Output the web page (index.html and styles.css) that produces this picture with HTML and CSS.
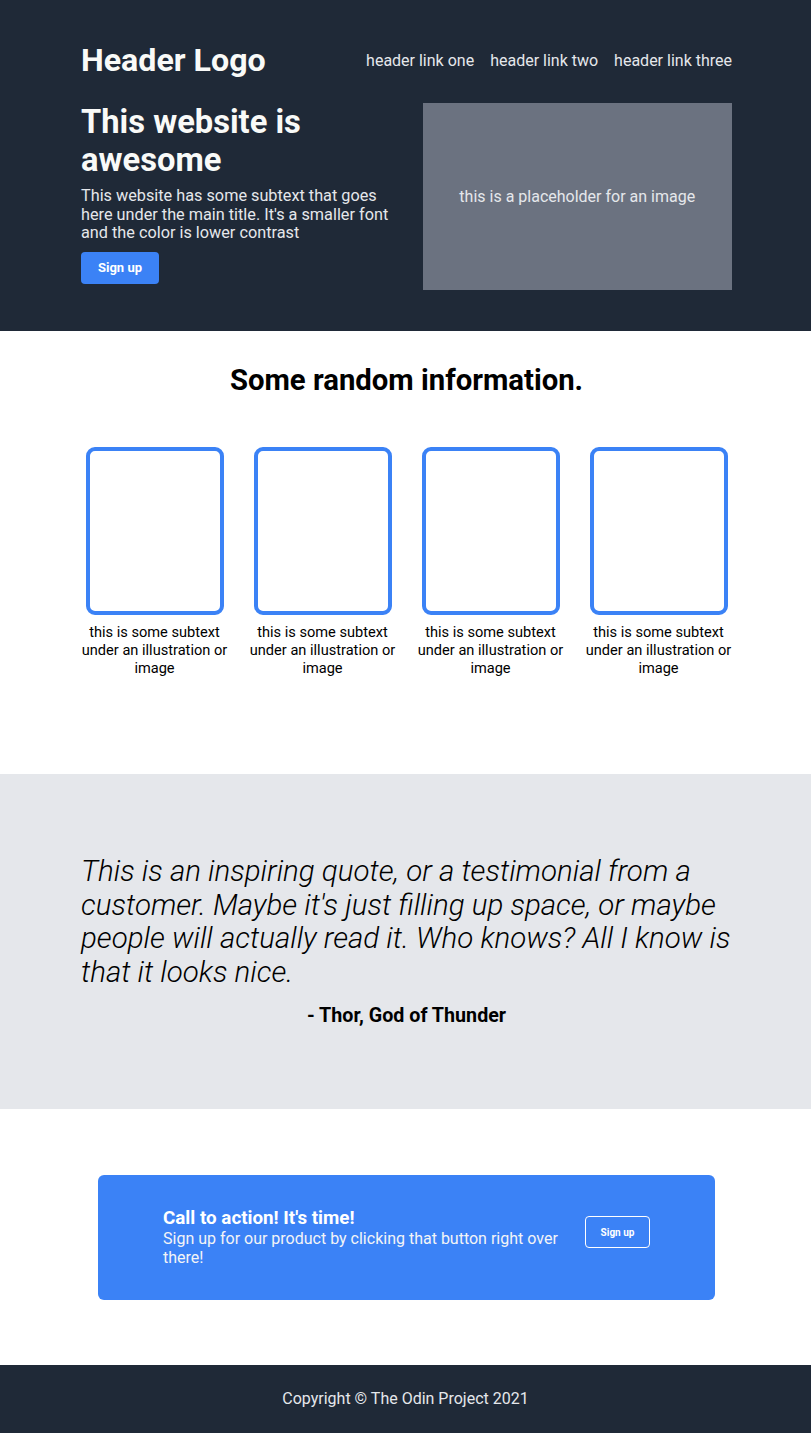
FILE: index.html
```html
<!DOCTYPE html>
<html lang="en">
<head>
<meta charset="utf-8">
<title>Landing Page</title>
<link rel="stylesheet" href="styles.css">
</head>
<body>
<header class="top">
  <div class="container">
    <div class="nav-row">
      <div class="logo">Header Logo</div>
      <nav class="links">
        <a href="#">header link one</a>
        <a href="#">header link two</a>
        <a href="#">header link three</a>
      </nav>
    </div>
    <div class="hero">
      <div class="hero-text">
        <h1 class="hero-title">This website is awesome</h1>
        <p class="hero-sub">This website has some subtext that goes here under the main title. It's a smaller font and the color is lower contrast</p>
        <button class="btn-primary">Sign up</button>
      </div>
      <div class="hero-image">this is a placeholder for an image</div>
    </div>
  </div>
</header>

<section class="info">
  <div class="container">
    <h2 class="info-title">Some random information.</h2>
    <div class="cards">
      <div class="card"><div class="card-box"></div><p class="card-text">this is some subtext under an illustration or image</p></div>
      <div class="card"><div class="card-box"></div><p class="card-text">this is some subtext under an illustration or image</p></div>
      <div class="card"><div class="card-box"></div><p class="card-text">this is some subtext under an illustration or image</p></div>
      <div class="card"><div class="card-box"></div><p class="card-text">this is some subtext under an illustration or image</p></div>
    </div>
  </div>
</section>

<section class="quote">
  <div class="container">
    <p class="quote-text">This is an inspiring quote, or a testimonial from a customer. Maybe it's just filling up space, or maybe people will actually read it. Who knows? All I know is that it looks nice.</p>
    <p class="quote-author">- Thor, God of Thunder</p>
  </div>
</section>

<section class="cta-section">
  <div class="cta">
    <div class="cta-text">
      <div class="cta-title">Call to action! It's time!</div>
      <div class="cta-sub">Sign up for our product by clicking that button right over there!</div>
    </div>
    <button class="btn-outline">Sign up</button>
  </div>
</section>

<footer class="footer">Copyright © The Odin Project 2021</footer>
</body>
</html>
```

FILE: styles.css
```css
* { box-sizing: border-box; }

body {
  margin: 0;
  font-family: Roboto, "Liberation Sans", sans-serif;
  color: #000;
  background: #fff;
}

.container {
  width: 651px;
  margin-left: calc(50% - 324.5px);
}

.top {
  background: #1f2937;
  padding: 41px 0 41px;
}

.nav-row {
  display: flex;
  justify-content: space-between;
  align-items: center;
  height: 38px;
}

.logo {
  font-size: 32.2px;
  font-weight: 700;
  color: #f9faf8;
}

.links {
  display: flex;
  gap: 16px;
}

.links a {
  color: #e5e7eb;
  text-decoration: none;
  font-size: 16px;
}

.hero {
  display: flex;
  gap: 32px;
  margin-top: 24px;
  align-items: flex-start;
}

.hero-text, .hero-image { flex: 1; }

.hero-text {
  display: flex;
  flex-direction: column;
  align-items: flex-start;
}

.hero-title {
  margin: 0;
  font-size: 32.7px;
  font-weight: 700;
  line-height: 38px;
  color: #f9faf8;
}

.hero-sub {
  margin: 8px 0 9px;
  font-size: 16.25px;
  line-height: 18.5px;
  color: #e5e7eb;
}

.btn-primary {
  font-family: inherit;
  background: #3b82f6;
  color: #fff;
  border: none;
  border-radius: 4px;
  height: 32px;
  width: 78px;
  padding: 0;
  font-size: 13px;
  font-weight: 700;
}

.hero-image {
  height: 187px;
  background: #6b7280;
  color: #e5e7eb;
  font-size: 16px;
  display: flex;
  align-items: center;
  justify-content: center;
}

.info {
  padding: 33px 0 97px;
}

.info-title {
  margin: 0;
  text-align: center;
  font-size: 29.3px;
  font-weight: 700;
  line-height: 33px;
}

.cards {
  margin-top: 50px;
  display: grid;
  grid-template-columns: repeat(4, 147px);
  gap: 21px;
}

.card {
  display: flex;
  flex-direction: column;
  align-items: center;
}

.card-box {
  width: 138px;
  height: 168px;
  border: 4px solid #3b82f6;
  border-radius: 9px;
}

.card-text {
  margin: 8px 0 0;
  text-align: center;
  font-size: 14.6px;
  line-height: 18px;
}

.quote {
  background: #e5e7eb;
  padding: 81px 0 82px;
}

.quote-text {
  margin: 0;
  font-size: 29.5px;
  font-weight: 300;
  font-style: italic;
  line-height: 33.5px;
}

.quote-author {
  margin: 15px 0 0;
  text-align: center;
  font-size: 19.7px;
  font-weight: 700;
  line-height: 23px;
}

.cta-section {
  padding: 66px 0 65px;
}

.cta {
  width: 617px;
  margin-left: calc(50% - 307.5px);
  height: 125px;
  background: #3b82f6;
  border-radius: 6px;
  padding: 0 65px;
  display: flex;
  align-items: center;
  gap: 24px;
  color: #fff;
}

.cta-text { flex: 1; }

.cta-title {
  font-size: 18.8px;
  font-weight: 700;
  line-height: 21px;
}

.cta-sub {
  font-size: 16px;
  line-height: 19px;
  color: #f3f4f6;
}

.btn-outline {
  font-family: inherit;
  background: transparent;
  color: #fff;
  border: 1px solid #fff;
  border-radius: 4px;
  width: 65px;
  height: 32px;
  padding: 0;
  font-size: 10px;
  font-weight: 700;
  margin-bottom: 11px;
}

.footer {
  background: #1f2937;
  color: #e5e7eb;
  text-align: center;
  font-size: 16px;
  line-height: 19px;
  padding: 24px 0 25px;
}
```
